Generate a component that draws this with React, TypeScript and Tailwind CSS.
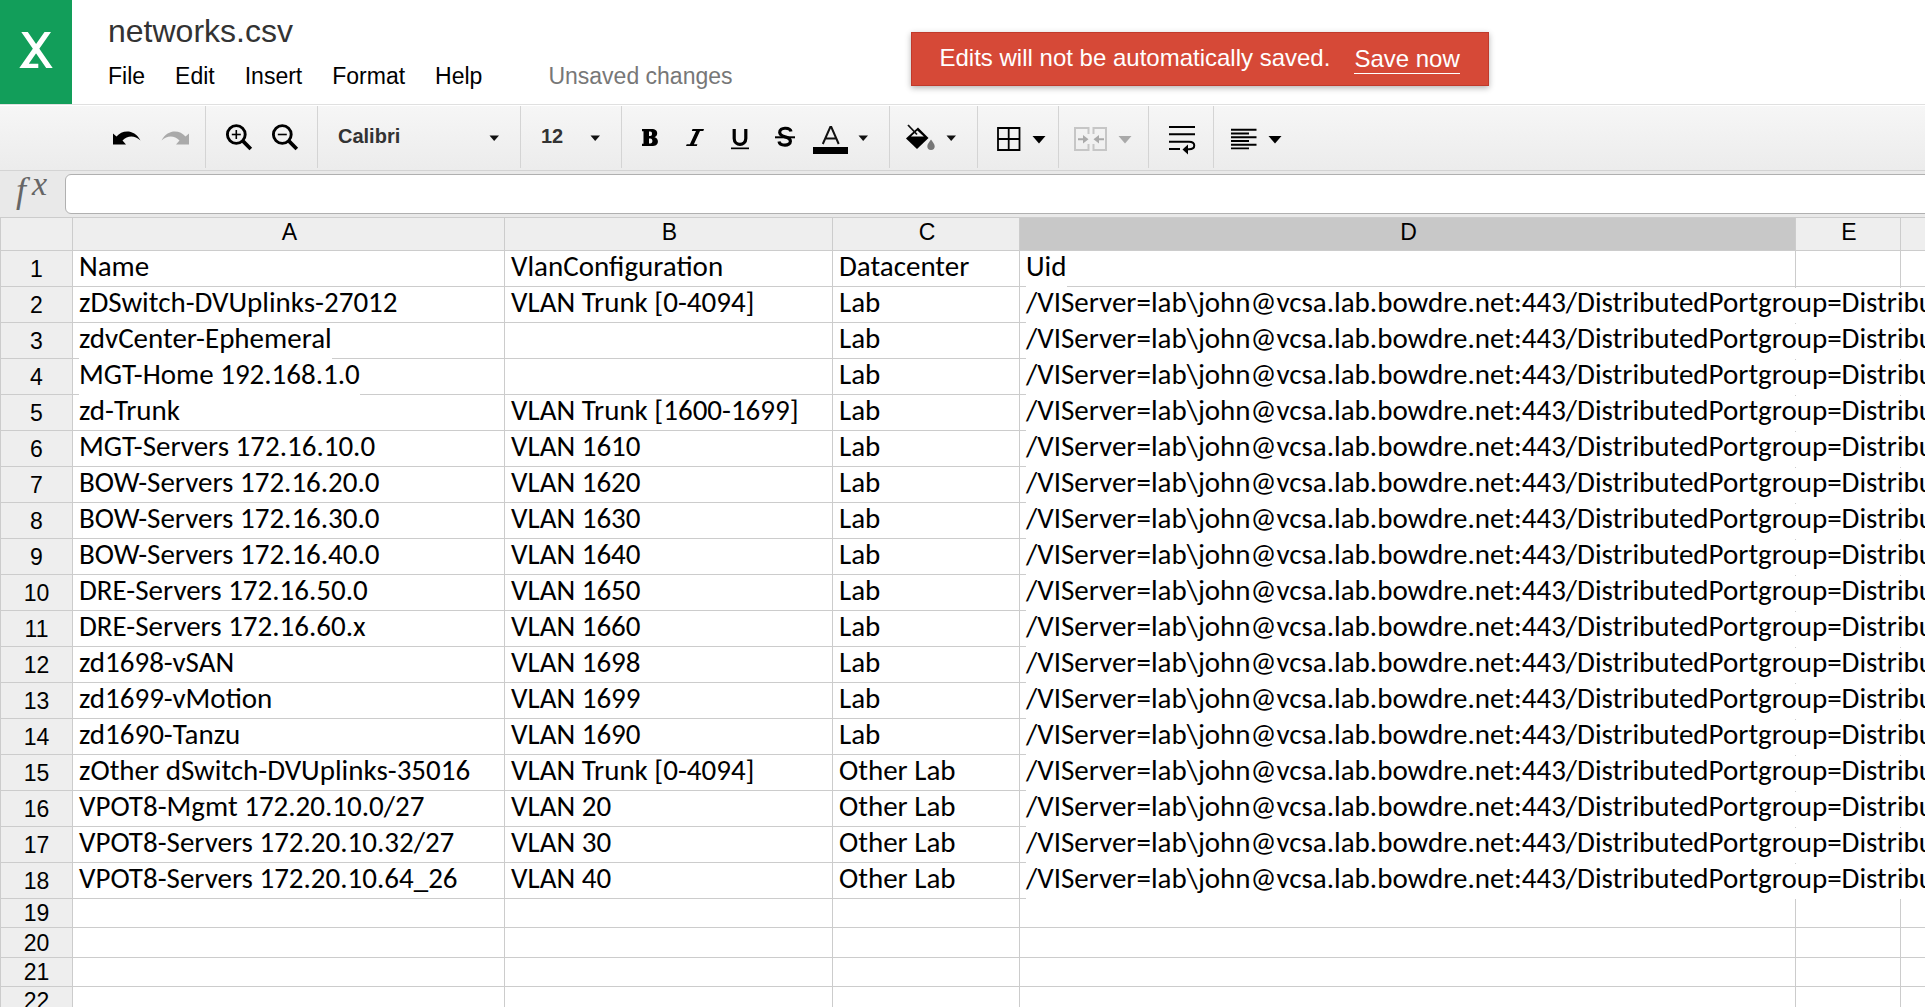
import type { ReactNode } from 'react'

const menus = ['File', 'Edit', 'Insert', 'Format', 'Help']
const uid = '/VIServer=lab\\john@vcsa.lab.bowdre.net:443/DistributedPortgroup=DistributedVirtualPortgroup'

const records: [string, string, string][] = [
  ['zDSwitch-DVUplinks-27012', 'VLAN Trunk [0-4094]', 'Lab'],
  ['zdvCenter-Ephemeral', '', 'Lab'],
  ['MGT-Home 192.168.1.0', '', 'Lab'],
  ['zd-Trunk', 'VLAN Trunk [1600-1699]', 'Lab'],
  ['MGT-Servers 172.16.10.0', 'VLAN 1610', 'Lab'],
  ['BOW-Servers 172.16.20.0', 'VLAN 1620', 'Lab'],
  ['BOW-Servers 172.16.30.0', 'VLAN 1630', 'Lab'],
  ['BOW-Servers 172.16.40.0', 'VLAN 1640', 'Lab'],
  ['DRE-Servers 172.16.50.0', 'VLAN 1650', 'Lab'],
  ['DRE-Servers 172.16.60.x', 'VLAN 1660', 'Lab'],
  ['zd1698-vSAN', 'VLAN 1698', 'Lab'],
  ['zd1699-vMotion', 'VLAN 1699', 'Lab'],
  ['zd1690-Tanzu', 'VLAN 1690', 'Lab'],
  ['zOther dSwitch-DVUplinks-35016', 'VLAN Trunk [0-4094]', 'Other Lab'],
  ['VPOT8-Mgmt 172.20.10.0/27', 'VLAN 20', 'Other Lab'],
  ['VPOT8-Servers 172.20.10.32/27', 'VLAN 30', 'Other Lab'],
  ['VPOT8-Servers 172.20.10.64_26', 'VLAN 40', 'Other Lab'],
]

const rows: string[][] = [
  ['Name', 'VlanConfiguration', 'Datacenter', 'Uid', '', ''],
  ...records.map((r) => [...r, uid, '', '']),
]
const emptyRows = [19, 20, 21, 22, 23]
const columns = ['A', 'B', 'C', 'D', 'E', '']

// Cells whose text box hides the grid line beneath it.
const hidesGrid = (row: number, col: number) => col === 3 || (col === 0 && (row === 3 || row === 4))

function Icon({ children, className = '' }: { children: ReactNode; className?: string }) {
  return (
    <svg viewBox="0 0 36 36" className={`size-9 shrink-0 ${className}`} aria-hidden="true">
      {children}
    </svg>
  )
}

function Tool({ label, children, disabled }: { label: string; children: ReactNode; disabled?: boolean }) {
  return (
    <button type="button" aria-label={label} title={label} disabled={disabled} className="shrink-0">
      <Icon>{children}</Icon>
    </button>
  )
}

function Caret({ label, big, disabled }: { label: string; big?: boolean; disabled?: boolean }) {
  return (
    <button type="button" aria-label={label} disabled={disabled} className="h-9 w-5 shrink-0">
      <svg viewBox="0 0 20 36" className="h-9 w-5" aria-hidden="true">
        {big ? (
          <path d="M3.5 16h13L10 23.5z" fill={disabled ? '#a9a9a9' : '#000'} />
        ) : (
          <path d="M5.5 15.5h9.5L10.2 21z" fill="#111" />
        )}
      </svg>
    </button>
  )
}

function Group({ children, className = '' }: { children: ReactNode; className?: string }) {
  return <div className={`flex items-center border-r border-[#d4d4d4] pt-0.5 ${className}`}>{children}</div>
}

function Picker({ label, value, className }: { label: string; value: string; className: string }) {
  return (
    <Group>
      <div className={`relative flex items-center ${className}`}>
        <select
          aria-label={label}
          defaultValue={value}
          className="h-9 w-full appearance-none bg-transparent pb-1 pl-5 text-xl/8 font-bold text-[#333] outline-none"
        >
          <option>{value}</option>
        </select>
        <svg viewBox="0 0 20 36" className="pointer-events-none absolute right-4 h-9 w-5" aria-hidden="true">
          <path d="M5.5 15.5h9.5L10.2 21z" fill="#111" />
        </svg>
      </div>
    </Group>
  )
}

function Header() {
  return (
    <header className="flex h-[105px] items-start border-b border-[#e0e0e0] bg-white">
      <a href="#home" aria-label="Home" className="h-[104px] w-[72px] shrink-0 bg-[#129e5a]">
        <svg viewBox="0 0 72 104" className="h-full w-full" aria-hidden="true">
          <path
            fill="#fff"
            d="M21.300 32h6.500L52.700 68h-6.500zM44.500 32h6.500L25.800 68h-6.500zM19.300 68l3-4.300h16V68z"
          />
        </svg>
      </a>
      <div className="ml-9 flex flex-col pt-3">
        <h1 className="text-[32px]/[38px] text-[#333]">networks.csv</h1>
        <nav className="mt-3 flex items-center text-[23px]/7 text-black">
          <div className="flex gap-[30px]">
            {menus.map((m) => (
              <button type="button" key={m}>
                {m}
              </button>
            ))}
          </div>
          <span className="ml-[66px] text-[#777]">Unsaved changes</span>
        </nav>
      </div>
      <div
        role="alert"
        className="mt-8 ml-[178px] flex h-[54px] items-center border border-[#c03a2b] bg-[#d64937] px-7 text-2xl/7 whitespace-nowrap text-white shadow-[0_2px_6px_rgba(0,0,0,0.3)]"
      >
        <span className="pb-0.5">Edits will not be automatically saved.</span>
        <a href="#save" className="ml-6 border-b border-white">
          Save now
        </a>
      </div>
    </header>
  )
}

function Toolbar() {
  return (
    <div
      role="toolbar"
      aria-label="Formatting"
      className="mt-px flex h-[65px] border-b border-[#d4d4d4] bg-linear-to-b from-[#f6f6f6] to-[#ececec] pb-0.5"
    >
      <Group className="gap-3 pr-3 pl-[109px]">
        <Tool label="Undo">
          <path d="M4 13.500l3.500 3C13 10 25 8.500 31.500 20.500 25.500 15 18.500 15.500 13.500 20.500l3.500 4H4z" />
        </Tool>
        <Tool label="Redo" disabled>
          <path
            fill="#aaa"
            d="M32 13.500l-3.500 3C23 10 11 8.500 4.500 20.500 10.500 15 17.500 15.500 22.500 20.500l-3.500 4h13z"
          />
        </Tool>
      </Group>
      <Group className="gap-2.5 pr-3.5 pl-[15px]">
        {['Zoom in', 'Zoom out'].map((label) => (
          <Tool key={label} label={label}>
            <g fill="none" stroke="#000">
              <circle cx="15.300" cy="14.500" r="8.900" strokeWidth="2.900" />
              <path d="M10.800 14.500h9" strokeWidth="1.600" />
              {label === 'Zoom in' && <path d="M15.300 10v9" strokeWidth="1.600" />}
              <path d="M21.500 20.700l8.300 8.300" strokeWidth="3.800" />
            </g>
          </Tool>
        ))}
      </Group>
      <Picker label="Font" value="Calibri" className="w-[202px]" />
      <Picker label="Font size" value="12" className="w-[100px]" />
      <Group className="pr-4 pl-2.5">
        <div className="flex gap-[9px]">
          <Tool label="Bold">
            <path
              fillRule="evenodd"
              d="M10 9h9.500c4 0 5.700 1.700 5.700 4.300 0 2-1 3.300-2.700 3.900 2.100.5 3.400 2 3.400 4.200 0 3-2.200 4.600-6.300 4.600H10v-2.300h1.500V11.300H10zm7 2.600v4.400h1.200c1.200 0 1.800-.8 1.800-2.200s-.6-2.200-1.800-2.200zm0 6.800v5h1.300c1.400 0 2.100-.9 2.100-2.500s-.7-2.500-2.100-2.500z"
            />
          </Tool>
          <Tool label="Italic">
            <path d="M15.500 9H27l-.7 2h-3.300l-6.100 13.200h3.500l-.6 1.800H9l.7-1.800h3.200L19 11h-4.200z" />
          </Tool>
          <Tool label="Underline">
            <path d="M12.200 9v9.500c0 7.700 11.600 7.700 11.600 0V9" fill="none" stroke="#000" strokeWidth="3.200" />
            <path d="M9 27.500h18v1.700H9z" />
          </Tool>
          <Tool label="Strikethrough">
            <path
              d="M24 11.500c-1-4.500-11.500-4.500-11.300 1 .1 2 2 3.300 5.500 4.400 3.600 1 5.200 2.200 5.200 4.400 0 5-10.500 5-11.400.2"
              fill="none"
              stroke="#000"
              strokeWidth="3.200"
            />
            <path d="M8 16.300h20v2H8z" />
          </Tool>
          <Tool label="Text color">
            <path d="M10.800 24L18.300 7h1L26.700 24M13.200 18.500h11" fill="none" stroke="#111" strokeWidth="2" />
            <path d="M1 27h35v7H1z" />
          </Tool>
        </div>
        <div className="ml-[5px] flex">
          <Caret label="Text color options" />
        </div>
      </Group>
      <Group className="gap-[3px] pr-4 pl-3">
        <Tool label="Fill color">
          <path d="M5 17.500L16 7.500l10.500 10.500L15 29 4 18.500z" />
          <path d="M9 16.500l6.300-6 6.500 6z" fill="#f2f2f2" />
          <path d="M6 5l9 9.500" stroke="#111" strokeWidth="1.800" fill="none" />
          <path d="M29 19.500c2 3 3.700 4.600 3.700 6.700a3.700 3.700 0 0 1-7.400 0c0-2.100 1.700-3.700 3.700-6.700z" fill="#777" />
        </Tool>
        <Caret label="Fill color options" />
      </Group>
      <Group className="gap-0.5 pr-[9px] pl-[13px]">
        <Tool label="Borders">
          <path d="M7 8h21.500v22H7zM17.700 8v22M7 19h21.500" fill="none" stroke="#000" strokeWidth="1.800" />
        </Tool>
        <Caret label="Border options" big />
      </Group>
      <Group className="gap-[7px] pr-[13px] pl-[13px]">
        <Tool label="Merge cells" disabled>
          <path
            d="M16.500 14V8H3v22h13.500v-6M21.500 14V8H34v22H21.500v-6"
            fill="none"
            stroke="#c6c6c6"
            strokeWidth="2"
          />
          <path
            d="M6 18.200h5V15l5.500 4.200-5.500 4.200v-3.200H6zM32 18.200h-5V15l-5.500 4.200 5.500 4.200v-3.200h5z"
            fill="#aaa"
          />
        </Tool>
        <Caret label="Merge options" big disabled />
      </Group>
      <Group className="pr-[13px] pl-[15px]">
        <Tool label="Wrap text">
          <path
            d="M5 7h26M5 14.300h26M5 21.700h20c7 0 7 7.500 0 7.500h-3M5 29h11"
            fill="none"
            stroke="#000"
            strokeWidth="2"
          />
          <path d="M24 24.500v10L18.500 29.500z" />
        </Tool>
      </Group>
      <div className="flex items-center gap-[3px] pt-0.5 pl-3">
        <Tool label="Align">
          <path
            d="M5 9.800h25.500M5 13.500h18M5 17.200h25.500M5 21h18M5 24.700h25.500M5 28.400h18"
            stroke="#000"
            strokeWidth="1.900"
          />
        </Tool>
        <Caret label="Align options" big />
      </div>
    </div>
  )
}

function FormulaBar() {
  return (
    <div className="flex h-[46px] items-start bg-[#e9e9e9] pt-[3px]">
      <label
        htmlFor="formula"
        className="flex w-[65px] shrink-0 gap-1.5 pl-4 font-['Liberation_Serif'] text-4xl/8 text-[#666] italic"
      >
        <span>f</span>
        <span className="text-[34px]/5">x</span>
      </label>
      <input
        id="formula"
        type="text"
        className="-mr-2 h-10 min-w-0 flex-1 rounded-md border border-[#b0b0b0] bg-white px-2 text-2xl outline-none"
      />
    </div>
  )
}

function Sheet() {
  return (
    <table className="w-[2007px] table-fixed border-separate border-spacing-0 border-t border-l border-[#ccc]">
      <colgroup>
        <col className="w-[72px]" />
        <col className="w-[432px]" />
        <col className="w-[328px]" />
        <col className="w-[187px]" />
        <col className="w-[776px]" />
        <col className="w-[105px]" />
        <col className="w-[106px]" />
      </colgroup>
      <thead>
        <tr className="h-[33px] text-[23px]/7">
          <td className="border-r border-b border-[#ccc] bg-[#eee] p-0" />
          {columns.map((c) => (
            <th
              key={c}
              scope="col"
              className={`border-r border-b border-[#ccc] p-0 pb-1 pl-0.5 font-normal ${c === 'D' ? 'bg-[#c8c8c8]' : 'bg-[#eee]'}`}
            >
              {c}
            </th>
          ))}
        </tr>
      </thead>
      <tbody>
        {rows.map((cells, r) => (
          <tr key={r} className="h-9">
            <th scope="row" className="border-r border-b border-[#ccc] bg-[#eee] p-0 text-[23px]/7 font-normal">
              {r + 1}
            </th>
            {cells.map((text, c) => (
              <td key={c} className="border-r border-b border-[#ccc] p-0 pl-1.5 align-top">
                {text && (
                  <span
                    className={`relative mt-px -mb-px block h-[35px] w-max font-[Carlito,Calibri,Lato,sans-serif] text-[29px]/7 whitespace-nowrap ${hidesGrid(r + 1, c) ? 'bg-white' : ''}`}
                  >
                    {text}
                  </span>
                )}
              </td>
            ))}
          </tr>
        ))}
        {emptyRows.map((n) => (
          <tr key={n} className={n === 20 ? 'h-[30px]' : 'h-[29px]'}>
            <th scope="row" className="border-r border-b border-[#ccc] bg-[#eee] p-0 text-[23px]/7 font-normal">
              {n}
            </th>
            {columns.map((c) => (
              <td key={c} className="border-r border-b border-[#ccc] p-0" />
            ))}
          </tr>
        ))}
      </tbody>
    </table>
  )
}

export default function App() {
  return (
    <div className="flex h-screen flex-col overflow-hidden bg-white font-['Liberation_Sans',Arial,sans-serif] text-black">
      <Header />
      <Toolbar />
      <FormulaBar />
      <main className="min-h-0 flex-1 overflow-hidden">
        <Sheet />
      </main>
    </div>
  )
}
